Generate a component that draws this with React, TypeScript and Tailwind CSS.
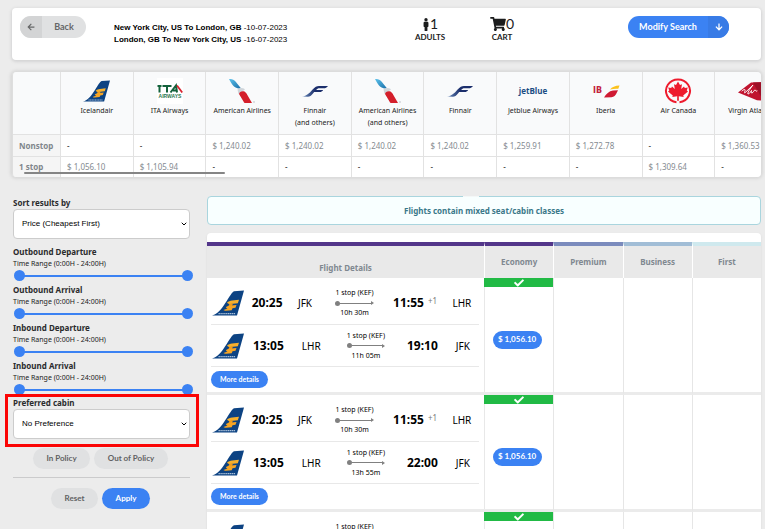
import React from "react";
import { FaMale, FaShoppingCart, FaArrowLeft, FaArrowDown, FaCheck } from "react-icons/fa";
import { ChevronDown } from "lucide-react";

const LATO = "font-[Lato,sans-serif]";

function IcelandairLogo({ className }: { className: string }) {
  return (
    <svg viewBox="0 0 32 26" className={className} aria-hidden="true">
      <path d="M0 25.500c6-2 9-6 13-12C18 6 20 2 22 1.200L32 0.500 25 25.500z" fill="#0d4383" />
      <path d="M15 12.600c1.500-1.300 3-1.900 5-2.100l7-.7-1.200 3.500-7.300.8c-1.500.1-2.500-.4-3.500-1.500z" fill="#f7b02c" />
      <path d="M17.500 13.800l3.500-.3-1.300 3-3.700.5z" fill="#f09a1c" />
      <path d="M13.800 17.200c1.500-1 3-1.500 5-1.700l5.700-.6-1 2.900-3 .4-.8 2-5.700.6c-1.300 0-2-.3-2.500-.8 1.500-.4 2.700-.9 4-1.700-.8-.2-1.300-.5-1.700-1.100z" fill="#f7a524" />
      <path d="M6.500 23.600h17" stroke="#a9bfd8" strokeWidth="1.300" strokeDasharray="1.400 .5" />
    </svg>
  );
}

function ItaLogo() {
  return (
    <svg viewBox="0 0 26 26" className="h-[26px] w-[26px]" aria-hidden="true">
      <rect width="26" height="26" fill="#fff" />
      <path d="M0.500 8h4M2.500 8v6.500M5.500 8h9M10 8v6.500" stroke="#14623c" strokeWidth="2" fill="none" />
      <path d="M13.500 14.500L19 7.500 20 14.500M16 12.500h4" stroke="#14623c" strokeWidth="2" fill="none" />
      <path d="M20 7.500l5.200 7" stroke="#d8232f" strokeWidth="1.800" />
      <text x="13" y="19.500" textAnchor="middle" fontSize="5" fontWeight="700" fill="#2d7750" fontFamily="Liberation Sans, sans-serif">AIRWAYS</text>
    </svg>
  );
}

function AmericanLogo() {
  return (
    <svg viewBox="0 0 26 26" className="h-[26px] w-[26px]" aria-hidden="true">
      <defs>
        <linearGradient id="aaBlue" x1="0" y1="0" x2="1" y2="1">
          <stop offset="0" stopColor="#5cc3ec" />
          <stop offset="1" stopColor="#176aa5" />
        </linearGradient>
      </defs>
      <path d="M0 1c3-.3 5 .6 6.500 2.500l6 7.500-4-.8C5 9.500 3 7 0 1z" fill="url(#aaBlue)" />
      <path d="M8.500 11.500c2-1.800 5-2 7.500-.2l-2.500 2.200-4 2.500z" fill="#cfd5da" />
      <path d="M10 16c.5-2 2-3 4.500-2.800 1.500.3 2.300 1.300 3 2.300L23 25h-6.500c-1 0-1.500-.5-2-1.500L10 16z" fill="#d41f2b" />
      <circle cx="25" cy="24" r=".8" fill="#b9bec3" />
    </svg>
  );
}

function FinnairLogo() {
  return (
    <svg viewBox="0 0 26 26" className="h-[26px] w-[26px]" aria-hidden="true">
      <defs>
        <linearGradient id="finn" x1="0" y1="0" x2="1" y2="0">
          <stop offset="0" stopColor="#6d8fbd" />
          <stop offset=".5" stopColor="#1c2f6c" />
        </linearGradient>
      </defs>
      <path d="M0 18.500c3-.2 4.500-1.200 7-3.200 3.500-3 5-7 10-7.300h9c-1.200 1.600-2.500 2.300-4.500 2.300h-4c-1.500 0-2.500.6-3.300 1.700h7c-1 1.500-2 2-3.700 2h-5.300c-1.700 2-3.200 4.700-6.200 4.700z" fill="url(#finn)" />
    </svg>
  );
}

function JetBlueLogo() {
  return (
    <span className="font-['Open_Sans',sans-serif] text-[8px] font-bold leading-3 text-[#1b4d84]">jetBlue</span>
  );
}

function IberiaLogo() {
  return (
    <svg viewBox="0 0 28 26" className="h-[26px] w-[28px]" aria-hidden="true">
      <text x="1" y="15" fontSize="8" fontWeight="700" fill="#c3223d" fontFamily="DejaVu Sans, sans-serif">IB</text>
      <path d="M12 19.500c2-3.500 5-6.500 9-7l5-.3-1.500 3c-1 2.200-2.500 3.800-5 4z" fill="#cf1a33" />
      <path d="M18 11.500c2-2.500 5-3.800 9.500-4l-1.200 3.300c-3-.2-5.500 0-8.300.7z" fill="#fbc21d" />
    </svg>
  );
}

function AirCanadaLogo() {
  return (
    <svg viewBox="0 0 28 26" className="h-[26px] w-[28px]" aria-hidden="true">
      <path d="M15.500 24.200A12 11.400 0 1 0 12.500 24.200" fill="none" stroke="#ee1b2d" strokeWidth="2" />
      <path d="M14 3.500l2 3.600 2-.9-.8 4.800 2.800-2.600.8 1.700 3-.5-1 2.900 1.200.9-4.800 4 .5 1.700-4.900-.8.1 4.500h-1.800l.1-4.500-4.900.8.500-1.700-4.800-4 1.200-.9-1-2.900 3 .5.800-1.700 2.800 2.600-.8-4.800 2 .9z" fill="#ee1b2d" />
    </svg>
  );
}

function VirginLogo() {
  return (
    <svg viewBox="0 0 34 26" className="h-[26px] w-[34px]" aria-hidden="true">
      <path d="M4 14.500L17 4.500l17-.5v19l-11-.8z" fill="#c0142f" />
      <path d="M19 4.500l15-.5v19l-5-1z" fill="#9d1027" />
      <path d="M8 13c2-2 3.500-2 3-.3s-1 3.300.8 1.300L19 7c-3.500 4.500-6 8.500-5 9s3-3 3.500-3.500-1 3 .5 2.500 2-3 3-3 .5 2 2 1" fill="none" stroke="#fff" strokeWidth="1" strokeLinecap="round" />
    </svg>
  );
}

type Airline = { name: string; others?: boolean; logo: React.ReactNode; nonstop: string; one: string };

const airlines: Airline[] = [
  { name: "Icelandair", logo: <IcelandairLogo className="h-[22px] w-[27px]" />, nonstop: "-", one: "$ 1,056.10" },
  { name: "ITA Airways", logo: <ItaLogo />, nonstop: "-", one: "$ 1,105.94" },
  { name: "American Airlines", logo: <AmericanLogo />, nonstop: "$ 1,240.02", one: "-" },
  { name: "Finnair", others: true, logo: <FinnairLogo />, nonstop: "$ 1,240.02", one: "-" },
  { name: "American Airlines", others: true, logo: <AmericanLogo />, nonstop: "$ 1,240.02", one: "-" },
  { name: "Finnair", logo: <FinnairLogo />, nonstop: "$ 1,240.02", one: "-" },
  { name: "Jetblue Airways", logo: <JetBlueLogo />, nonstop: "$ 1,259.91", one: "-" },
  { name: "Iberia", logo: <IberiaLogo />, nonstop: "$ 1,272.78", one: "-" },
  { name: "Air Canada", logo: <AirCanadaLogo />, nonstop: "-", one: "$ 1,309.64" },
  { name: "Virgin Atlantic", logo: <VirginLogo />, nonstop: "$ 1,360.53", one: "-" },
];

function Header() {
  return (
    <header className="grid h-[52px] grid-cols-[94fr_280fr_72fr_162fr_125fr] items-start rounded-sm bg-white px-2 pt-2 shadow-[0_1px_3px_1px_#d4d4d5]">
      <div>
        <button className={`flex h-[22px] w-[66px] overflow-hidden rounded-full bg-[#e0e1e2] text-[9px] font-bold text-[#666768] ${LATO}`}>
          <span className="flex h-full w-[22px] items-center justify-center bg-[#d3d4d5]">
            <FaArrowLeft className="h-2 w-2" />
          </span>
          <span className="flex-1 text-center leading-[22px]">Back</span>
        </button>
      </div>
      <div className="pt-1.5 font-['Liberation_Sans',sans-serif] text-[8px] leading-3 text-black">
        <p><b>New York City, US To London, GB</b> -10-07-2023</p>
        <p><b>London, GB To New York City, US</b> -16-07-2023</p>
      </div>
      <div className={`pt-px text-center text-[#1b1c1d] ${LATO}`}>
        <p className="flex h-[14px] items-center justify-center text-[14px] leading-[14px]">
          <FaMale className="h-[13px] w-[8px]" />1
        </p>
        <p className="text-[8px] font-bold leading-3">ADULTS</p>
      </div>
      <div className={`w-[72px] pt-px text-center text-[#1b1c1d] ${LATO}`}>
        <p className="flex h-[14px] items-center justify-center text-[14px] leading-[14px]">
          <FaShoppingCart className="h-[14px] w-4" />0
        </p>
        <p className="text-[8px] font-bold leading-3">CART</p>
      </div>
      <div>
        <button className={`flex h-[22px] w-[101px] overflow-hidden rounded-full bg-[#3b82f3] text-[9px] font-bold text-white ${LATO}`}>
          <span className="flex-1 text-center leading-[22px]">Modify Search</span>
          <span className="flex h-full w-[21px] items-center justify-center bg-[#387be6]">
            <FaArrowDown className="h-2 w-2" />
          </span>
        </button>
      </div>
    </header>
  );
}

function PriceMatrix() {
  const value = (v: string) => (
    <span className={v === "-" ? "text-[#222]" : "text-[#858b91]"}>{v}</span>
  );
  const rowHead = "border-t border-[#e2e2e2] bg-[#f5f5f5] pl-1.5 text-left text-[8px] font-bold leading-3 text-[#80868b]";
  const cell = "border-l border-t border-[#e2e2e2] bg-white pl-1.5 text-[8px] leading-3";
  return (
    <section className="relative overflow-hidden rounded-sm border-l border-[#dedede] shadow-[0_0_3px_2px_#d9d9d9]">
      <table className="w-[774px] table-fixed border-separate border-spacing-0">
        <thead>
          <tr>
            <td className="h-[62px] w-[47px] bg-[#f9fafb]" />
            {airlines.map((a, i) => (
              <th key={i} scope="col" className="border-l border-[#e2e2e2] bg-[#f9fafb] pt-1.5 align-top text-[7px] font-normal leading-3 text-[#222]">
                <span className="mb-px flex h-[26px] items-center justify-center">{a.logo}</span>
                <span className="block whitespace-nowrap">{a.name}</span>
                {a.others && <span className="block">(and others)</span>}
              </th>
            ))}
          </tr>
        </thead>
        <tbody>
          <tr>
            <th scope="row" className={`h-[22px] ${rowHead}`}>Nonstop</th>
            {airlines.map((a, i) => <td key={i} className={cell}>{value(a.nonstop)}</td>)}
          </tr>
          <tr>
            <th scope="row" className={`h-[21px] ${rowHead}`}>1 stop</th>
            {airlines.map((a, i) => <td key={i} className={cell}>{value(a.one)}</td>)}
          </tr>
        </tbody>
      </table>
      <div className="absolute bottom-[3px] left-[11px] h-0.5 w-[201px] rounded-full bg-[#858585]" />
    </section>
  );
}

function SelectField({ id, label, option }: { id: string; label: string; option: string }) {
  return (
    <div>
      <label htmlFor={id} className="block text-[8px] font-bold leading-3 text-[#2a2b2c]">{label}</label>
      <div className="grid items-center">
        <select id={id} className="col-start-1 row-start-1 h-[30px] w-full appearance-none rounded border border-[#ccc] bg-white pl-2 font-['Liberation_Sans',sans-serif] text-[8px] text-black">
          <option>{option}</option>
        </select>
        <ChevronDown className="pointer-events-none col-start-1 row-start-1 mr-0.5 h-2 w-2 justify-self-end text-black" strokeWidth={3} />
      </div>
    </div>
  );
}

const thumb =
  "pointer-events-none col-start-1 row-start-1 h-[11px] w-full appearance-none bg-transparent [&::-webkit-slider-thumb]:pointer-events-auto [&::-webkit-slider-thumb]:h-[11px] [&::-webkit-slider-thumb]:w-[11px] [&::-webkit-slider-thumb]:appearance-none [&::-webkit-slider-thumb]:rounded-full [&::-webkit-slider-thumb]:bg-[#3b82f3]";

function TimeRange({ title }: { title: string }) {
  return (
    <fieldset>
      <legend className="block text-[8px] font-bold leading-3 text-[#2a2b2c]">{title}</legend>
      <p className="text-[7px] leading-3 text-[#222]">Time Range (0:00H - 24:00H)</p>
      <div className="-mr-[3px] ml-px grid items-center">
        <div className="col-start-1 row-start-1 mx-1 h-0.5 bg-[#3b82f3]" />
        <input type="range" min={0} max={24} defaultValue={0} aria-label={`${title} from`} className={thumb} />
        <input type="range" min={0} max={24} defaultValue={24} aria-label={`${title} to`} className={thumb} />
      </div>
    </fieldset>
  );
}

function Sidebar() {
  const pill = `rounded-full text-[8px] font-bold leading-[21px] ${LATO}`;
  return (
    <aside className="w-[177px] shrink-0 pt-px">
      <SelectField id="sort" label="Sort results by" option="Price (Cheapest First)" />
      <div className="mt-[7px] flex flex-col gap-[3px]">
        {["Outbound Departure", "Outbound Arrival", "Inbound Departure", "Inbound Arrival"].map((t) => (
          <TimeRange key={t} title={t} />
        ))}
      </div>
      <div className="relative -ml-2 -mr-[9px] -mt-px border-[3px] border-[#fb0505] pb-[5px] pl-[5px] pr-1.5">
        <SelectField id="cabin" label="Preferred cabin" option="No Preference" />
      </div>
      <div className="mt-px flex justify-center gap-1 pr-0.5">
        <button className={`${pill} w-[57px] bg-[#e0e1e2] text-[#606162]`}>In Policy</button>
        <button className={`${pill} w-[74px] bg-[#e0e1e2] text-[#606162]`}>Out of Policy</button>
      </div>
      <hr className="mb-2.5 mt-2 border-[#cbcbcc]" />
      <div className="flex justify-center gap-1 pr-0.5">
        <button className={`${pill} w-[47px] bg-[#e0e1e2] text-[#606162]`}>Reset</button>
        <button className={`${pill} w-12 bg-[#3b82f3] text-white`}>Apply</button>
      </div>
    </aside>
  );
}

type Leg = { dep: string; from: string; dur: string; arr: string; plus?: boolean; to: string };

function LegRow({ leg, className }: { leg: Leg; className: string }) {
  return (
    <div className={`flex items-center border-b border-[#e8e8e8] pl-px ${className}`}>
      <IcelandairLogo className="h-[26px] w-8 shrink-0" />
      <div className="flex flex-1 items-center justify-around text-black">
        <b className="text-[12px] leading-4">{leg.dep}</b>
        <span className="text-[10px] leading-4">{leg.from}</span>
        <div className="pl-2 pr-1 text-center text-[7px] leading-[10px]">
          <p>1 stop (KEF)</p>
          <div className="flex h-[10px] items-center justify-center">
            <span className="h-[5px] w-[5px] rounded-full bg-[#808080]" />
            <span className="h-px flex-1 bg-[#808080]" />
            <span className="h-0 w-0 border-y-2 border-l-[3px] border-y-transparent border-l-[#808080]" />
          </div>
          <p>{leg.dur}</p>
        </div>
        <span className="flex items-center gap-1">
          <b className="text-[12px] leading-4">{leg.arr}</b>
          {leg.plus && <span className="pb-1 text-[8px] leading-3 text-[#777]">+1</span>}
        </span>
        <span className="text-[10px] leading-4">{leg.to}</span>
      </div>
    </div>
  );
}

const outbound: Leg = { dep: "20:25", from: "JFK", dur: "10h 30m", arr: "11:55", plus: true, to: "LHR" };
const flights: Leg[][] = [
  [outbound, { dep: "13:05", from: "LHR", dur: "11h 05m", arr: "19:10", to: "JFK" }],
  [outbound, { dep: "13:05", from: "LHR", dur: "13h 55m", arr: "22:00", to: "JFK" }],
  [outbound, { dep: "13:05", from: "LHR", dur: "13h 55m", arr: "22:00", to: "JFK" }],
];

const cabins = [
  { name: "Economy", bar: "border-t-[#53368a]" },
  { name: "Premium", bar: "border-t-[#7b8bbd]" },
  { name: "Business", bar: "border-t-[#a1bdd6]" },
  { name: "First", bar: "border-t-[#cfe9ee]" },
];

function Results() {
  return (
    <main className="min-w-0 flex-1">
      <div className="relative h-[29px] rounded-sm border border-[#a9d5de] bg-[#f8ffff] text-center text-[8px] font-bold leading-[28px] text-[#3a7889]">
        Flights contain mixed seat/cabin classes
        <span className="absolute -top-px left-[255px] h-px w-4 bg-[#f4f8f8]" />
      </div>
      <section className="mt-2 rounded-sm bg-white pt-[9px] shadow-[0_1px_2px_0_#d4d4d5]">
        <table className="w-full table-fixed border-separate border-spacing-0">
          <thead>
            <tr className="text-[8px] leading-3 text-[#808890]">
              <th scope="col" className="h-9 w-1/2 border-t-4 border-t-[#53368a] bg-[#e9e9e9] pt-3">Flight Details</th>
              {cabins.map((c) => (
                <th key={c.name} scope="col" className={`border-l border-t-4 border-l-white bg-[#e9e9e9] ${c.bar}`}>{c.name}</th>
              ))}
            </tr>
          </thead>
          <tbody>
            {flights.map((legs, i) => (
              <tr key={i}>
                <td className="border-b-[3px] border-[#ebebeb] pb-1 pl-1 pr-[5px] align-top">
                  <LegRow leg={legs[0]} className="h-[47px] pt-1" />
                  <LegRow leg={legs[1]} className="h-[42px]" />
                  <button className={`mt-1 block h-[17px] w-[57px] rounded-full bg-[#3b82f3] text-[7px] font-bold leading-[17px] text-white ${LATO}`}>
                    More details
                  </button>
                </td>
                <td className="h-[117px] border-b-[3px] border-[#ebebeb] align-top">
                  <div className="flex h-[9px] items-center justify-center overflow-hidden bg-[#21ba45]">
                    <FaCheck className="h-2.5 w-2.5 text-white" aria-label="Available" />
                  </div>
                  <div className="flex h-[105px] items-center justify-center border-l border-[#e8e8e8] pr-1">
                    <button className={`h-[18px] w-[49px] rounded-full bg-[#3b82f3] text-[8px] font-bold leading-[17px] text-white ${LATO}`}>
                      $ 1,056.10
                    </button>
                  </div>
                </td>
                {[0, 1, 2].map((k) => (
                  <td key={k} className="border-b-[3px] border-l border-b-[#ebebeb] border-l-[#e6e6e6]" />
                ))}
              </tr>
            ))}
          </tbody>
        </table>
      </section>
    </main>
  );
}

export default function App() {
  return (
    <div className="h-screen overflow-hidden bg-[#ececec] pl-3 pr-1 pt-2 font-['Noto_Sans',sans-serif]">
      <Header />
      <div className="mt-3">
        <PriceMatrix />
      </div>
      <div className="mt-[19px] flex gap-[17px] pl-px">
        <Sidebar />
        <Results />
      </div>
    </div>
  );
}
